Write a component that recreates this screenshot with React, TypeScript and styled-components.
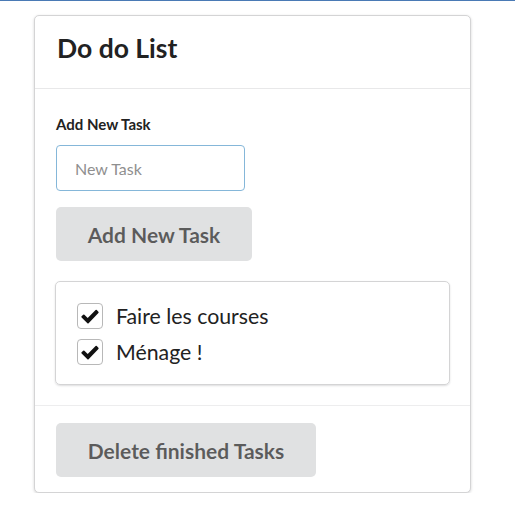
import React, { useState } from 'react'
import styled, { createGlobalStyle } from 'styled-components'

const GlobalStyle = createGlobalStyle`
    html, body {
        margin: 0;
        padding: 0;
        background: #ffffff;
        font-family: Lato, "Open Sans", Arial, sans-serif;
    }
    body {
        border-top: 1px solid #4a7ab5;
    }
`

const Page = styled.div`
    padding: 14px 0 0 34px;
`

const Card = styled.div`
    width: 435px;
    border: 1px solid #d4d4d5;
    border-radius: 5px;
    box-shadow: 0 1px 3px 0 #d4d4d5;
    background: #ffffff;
`

const Header = styled.div`
    height: 73px;
    box-sizing: border-box;
    padding: 15px 22px 0;
    border-bottom: 1px solid #e8e8e9;
`

const Title = styled.h1`
    margin: 0;
    font-size: 26.5px;
    line-height: 34px;
    font-weight: 700;
    color: #222222;
`

const Content = styled.div`
    padding: 26px 19px 20px 21px;
    display: flex;
    flex-direction: column;
    align-items: flex-start;
`

const Label = styled.label`
    display: block;
    font-size: 15px;
    line-height: 18px;
    font-weight: 700;
    color: #222222;
    margin-bottom: 12px;
`

const TaskInput = styled.input`
    width: 189px;
    height: 46px;
    box-sizing: border-box;
    padding: 0 18px;
    border: 1px solid #85b7d9;
    border-radius: 4px;
    font-family: inherit;
    font-size: 16px;
    color: #333333;
    outline: none;
    &::placeholder {
        color: #8f8f8f;
    }
`

const Button = styled.button<{ $width: number; $height: number }>`
    width: ${(p) => p.$width}px;
    height: ${(p) => p.$height}px;
    padding: 0;
    border: none;
    border-radius: 5px;
    background: #e0e1e2;
    color: rgba(0, 0, 0, 0.6);
    font-family: inherit;
    font-size: 21px;
    font-weight: 700;
    cursor: pointer;
`

const AddButton = styled(Button)`
    margin-top: 16px;
`

const Segment = styled.div`
    margin-top: 20px;
    margin-left: -1px;
    width: 395px;
    height: 104px;
    box-sizing: border-box;
    padding: 21px 21px 0;
    border: 1px solid #d4d4d5;
    border-radius: 5px;
    box-shadow: 0 1px 2px 0 rgba(34, 36, 38, 0.15);
    display: flex;
    flex-direction: column;
    gap: 10px;
`

const TaskRow = styled.label`
    display: flex;
    align-items: center;
    gap: 13px;
    height: 26px;
    font-size: 21.3px;
    color: #222222;
    cursor: pointer;
`

const Box = styled.span`
    width: 26px;
    height: 26px;
    flex: none;
    box-sizing: border-box;
    border: 1px solid #b8b8b8;
    border-radius: 4px;
    display: flex;
    align-items: center;
    justify-content: center;
`

const Footer = styled.div`
    border-top: 1px solid #ededee;
    padding: 17px 21px 15px;
`

const Check = () => (
    <svg width="18" height="15" viewBox="0 0 18 15">
        <path
            d="M6.4 14.3 L0.6 8.5 Q0 7.9 0.6 7.3 L2.2 5.7 Q2.8 5.1 3.4 5.7 L6.7 9 L14.6 1.1 Q15.2 0.5 15.8 1.1 L17.4 2.7 Q18 3.3 17.4 3.9 L7.6 14.3 Q7 14.9 6.4 14.3 Z"
            fill="#111"
        />
    </svg>
)

export default function App() {
    const [tasks, setTasks] = useState([
        { label: 'Faire les courses', done: true },
        { label: 'Ménage !', done: true },
    ])
    return (
        <Page>
            <GlobalStyle />
            <Card>
                <Header>
                    <Title>Do do List</Title>
                </Header>
                <Content>
                    <Label>Add New Task</Label>
                    <TaskInput placeholder="New Task" />
                    <AddButton $width={196} $height={54}>Add New Task</AddButton>
                    <Segment>
                        {tasks.map((t, i) => (
                            <TaskRow
                                key={t.label}
                                onClick={() =>
                                    setTasks(tasks.map((x, j) => (j === i ? { ...x, done: !x.done } : x)))
                                }
                            >
                                <Box>{t.done && <Check />}</Box>
                                {t.label}
                            </TaskRow>
                        ))}
                    </Segment>
                </Content>
                <Footer>
                    <Button $width={260} $height={54}>Delete finished Tasks</Button>
                </Footer>
            </Card>
        </Page>
    )
}
